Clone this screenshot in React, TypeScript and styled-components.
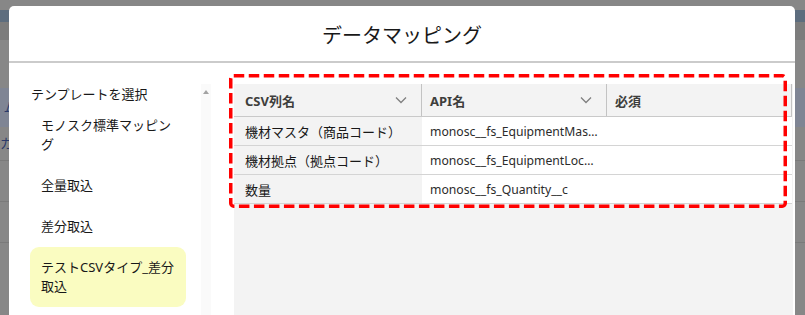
import React from 'react';
import styled, { createGlobalStyle } from 'styled-components';

const GlobalStyle = createGlobalStyle`
  html, body {
    margin: 0;
    padding: 0;
    width: 805px;
    height: 315px;
    overflow: hidden;
  }
  body {
    font-family: "Noto Sans", "Noto Sans CJK JP", sans-serif;
    color: #181818;
  }
`;

// page behind the modal, dimmed
const Backdrop = styled.div`
  position: relative;
  width: 805px;
  height: 315px;
  overflow: hidden;
  background: #878787;
`;

const BehindPage = styled.div`
  display: flex;
  flex-direction: column;
  padding-top: 10px;
`;

const BehindStrip = styled.div<{ $h: number; $bg: string; $line?: boolean }>`
  height: ${p => p.$h}px;
  background: ${p => p.$bg};
  border-bottom: ${p => (p.$line ? '1px solid #7a7a7a' : 'none')};
  font-size: 13px;
  line-height: ${p => p.$h}px;
  color: #2a3a6a;
  overflow: hidden;
  white-space: nowrap;
`;

const Modal = styled.div`
  position: absolute;
  left: 9px;
  top: 6px;
  width: 786px;
  bottom: -20px;
  background: #fff;
  border-radius: 5px 5px 0 0;
  display: flex;
  flex-direction: column;
`;

const ModalHeader = styled.div`
  height: 57px;
  flex-shrink: 0;
  border-bottom: 2px solid #cbcbcb;
  display: flex;
  align-items: center;
  justify-content: center;
  padding-top: 2px;
  box-sizing: border-box;
  font-family: "Noto Sans CJK JP", sans-serif;
  font-size: 20px;
  color: #181818;
`;

const ModalBody = styled.div`
  flex: 1;
  display: flex;
  position: relative;
`;

const Sidebar = styled.div`
  width: 225px;
  flex-shrink: 0;
  display: flex;
  padding-top: 21px;
  box-sizing: border-box;
`;

const TemplateList = styled.div`
  width: 192px;
  padding-left: 21px;
  box-sizing: border-box;
  display: flex;
  flex-direction: column;
`;

const SectionTitle = styled.div`
  font-family: "Noto Sans CJK JP", sans-serif;
  font-size: 13px;
  line-height: 19px;
  padding-left: 1px;
  margin-bottom: 2px;
  color: #181818;
`;

const TemplateItem = styled.div<{ $active?: boolean }>`
  width: 156px;
  box-sizing: border-box;
  padding: 11px 11px;
  font-size: 13px;
  line-height: 19px;
  border-radius: 9px;
  background: ${p => (p.$active ? '#fafcc1' : 'transparent')};
  color: #181818;
`;

const Scrollbar = styled.div`
  width: 10px;
  background: #fafafa;
  display: flex;
  justify-content: center;
  padding-top: 6px;
  box-sizing: border-box;
`;

const ScrollArrow = styled.div`
  width: 0;
  height: 0;
  border-left: 3.5px solid transparent;
  border-right: 3.5px solid transparent;
  border-bottom: 4px solid #a3a3a3;
`;

const Content = styled.div`
  flex: 1;
  display: flex;
  padding: 21px 2px 0 0;
`;

const GrayPanel = styled.div`
  flex: 1;
  background: #f3f3f3;
`;

const Table = styled.div`
  width: 558px;
  display: flex;
  flex-direction: column;
`;

const HeaderRow = styled.div`
  display: flex;
  height: 33px;
  background: #f3f3f3;
  border-bottom: 1px solid #c9c9c9;
  box-sizing: border-box;
`;

const HeaderCell = styled.div<{ $w: number; $first?: boolean }>`
  width: ${p => p.$w}px;
  flex-shrink: 0;
  box-sizing: border-box;
  display: flex;
  align-items: center;
  justify-content: space-between;
  padding: 0 14px 0 ${p => (p.$first ? 11 : 8)}px;
  border-right: 1px solid #c3c3c3;
  font-size: 13px;
  font-weight: 700;
  color: #3e3e3c;
`;

const BodyRow = styled.div`
  display: flex;
  height: 29px;
  border-bottom: 1px solid #d4d4d4;
  box-sizing: border-box;
`;

const Cell = styled.div<{ $w: number; $first?: boolean }>`
  width: ${p => p.$w}px;
  flex-shrink: 0;
  box-sizing: border-box;
  padding: 0 8px 0 ${p => (p.$first ? 11 : 8)}px;
  display: flex;
  align-items: center;
  background: ${p => (p.$first ? '#f3f3f3' : '#fff')};
  font-size: 13px;
  color: #181818;
  overflow: hidden;
`;

const CellText = styled.span<{ $latin?: boolean }>`
  overflow: hidden;
  white-space: nowrap;
  text-overflow: ellipsis;
  font-size: ${p => (p.$latin ? '12.2px' : '13px')};
  color: ${p => (p.$latin ? '#2b2b2b' : '#181818')};
`;

const Annotation = styled.svg`
  position: absolute;
  left: 220px;
  top: 11px;
  pointer-events: none;
`;

const Chevron = () => (
  <svg width="12" height="8" viewBox="0 0 12 8">
    <path d="M1 1.5 L6 6.5 L11 1.5" fill="none" stroke="#7f7f7f" strokeWidth="1.3" />
  </svg>
);

const templates = [
  { name: 'モノスク標準マッピング' },
  { name: '全量取込' },
  { name: '差分取込' },
  { name: 'テストCSVタイプ_差分取込', active: true },
];

const cols = [188, 185, 185];

const rows = [
  ['機材マスタ（商品コード）', 'monosc__fs_EquipmentMaster__c', ''],
  ['機材拠点（拠点コード）', 'monosc__fs_EquipmentLocation__c', ''],
  ['数量', 'monosc__fs_Quantity__c', ''],
];

export default function App() {
  return (
    <Backdrop>
      <GlobalStyle />
      <BehindPage>
        <BehindStrip $h={12} $bg="#5d6d7e" />
        <BehindStrip $h={18} $bg="#7c7c7c" />
        <BehindStrip $h={48} $bg="#878787" />
        <BehindStrip $h={39} $bg="#7f8594">&nbsp;ム</BehindStrip>
        <BehindStrip $h={33} $bg="#878787" $line>カ</BehindStrip>
        <BehindStrip $h={40} $bg="#878787" $line />
        <BehindStrip $h={40} $bg="#878787" $line />
      </BehindPage>
      <Modal>
        <ModalHeader>データマッピング</ModalHeader>
        <ModalBody>
          <Sidebar>
            <TemplateList>
              <SectionTitle>テンプレートを選択</SectionTitle>
              {templates.map(t => (
                <TemplateItem key={t.name} $active={t.active}>{t.name}</TemplateItem>
              ))}
            </TemplateList>
            <Scrollbar>
              <ScrollArrow />
            </Scrollbar>
          </Sidebar>
          <Content>
            <GrayPanel>
              <Table>
                <HeaderRow>
                  <HeaderCell $w={cols[0]} $first>CSV列名<Chevron /></HeaderCell>
                  <HeaderCell $w={cols[1]}>API名<Chevron /></HeaderCell>
                  <HeaderCell $w={cols[2]}>必須</HeaderCell>
                </HeaderRow>
                {rows.map(r => (
                  <BodyRow key={r[1]}>
                    <Cell $w={cols[0]} $first><CellText>{r[0]}</CellText></Cell>
                    <Cell $w={cols[1]}><CellText $latin>{r[1]}</CellText></Cell>
                    <Cell $w={cols[2]}><CellText>{r[2]}</CellText></Cell>
                  </BodyRow>
                ))}
              </Table>
            </GrayPanel>
          </Content>
          <Annotation width="558" height="134" viewBox="0 0 558 134">
            <rect x="1.75" y="1.75" width="554.5" height="130.5" rx="3" fill="none"
              stroke="#ff0000" strokeWidth="3.5" strokeDasharray="10.5 4.5" />
          </Annotation>
        </ModalBody>
      </Modal>
    </Backdrop>
  );
}
